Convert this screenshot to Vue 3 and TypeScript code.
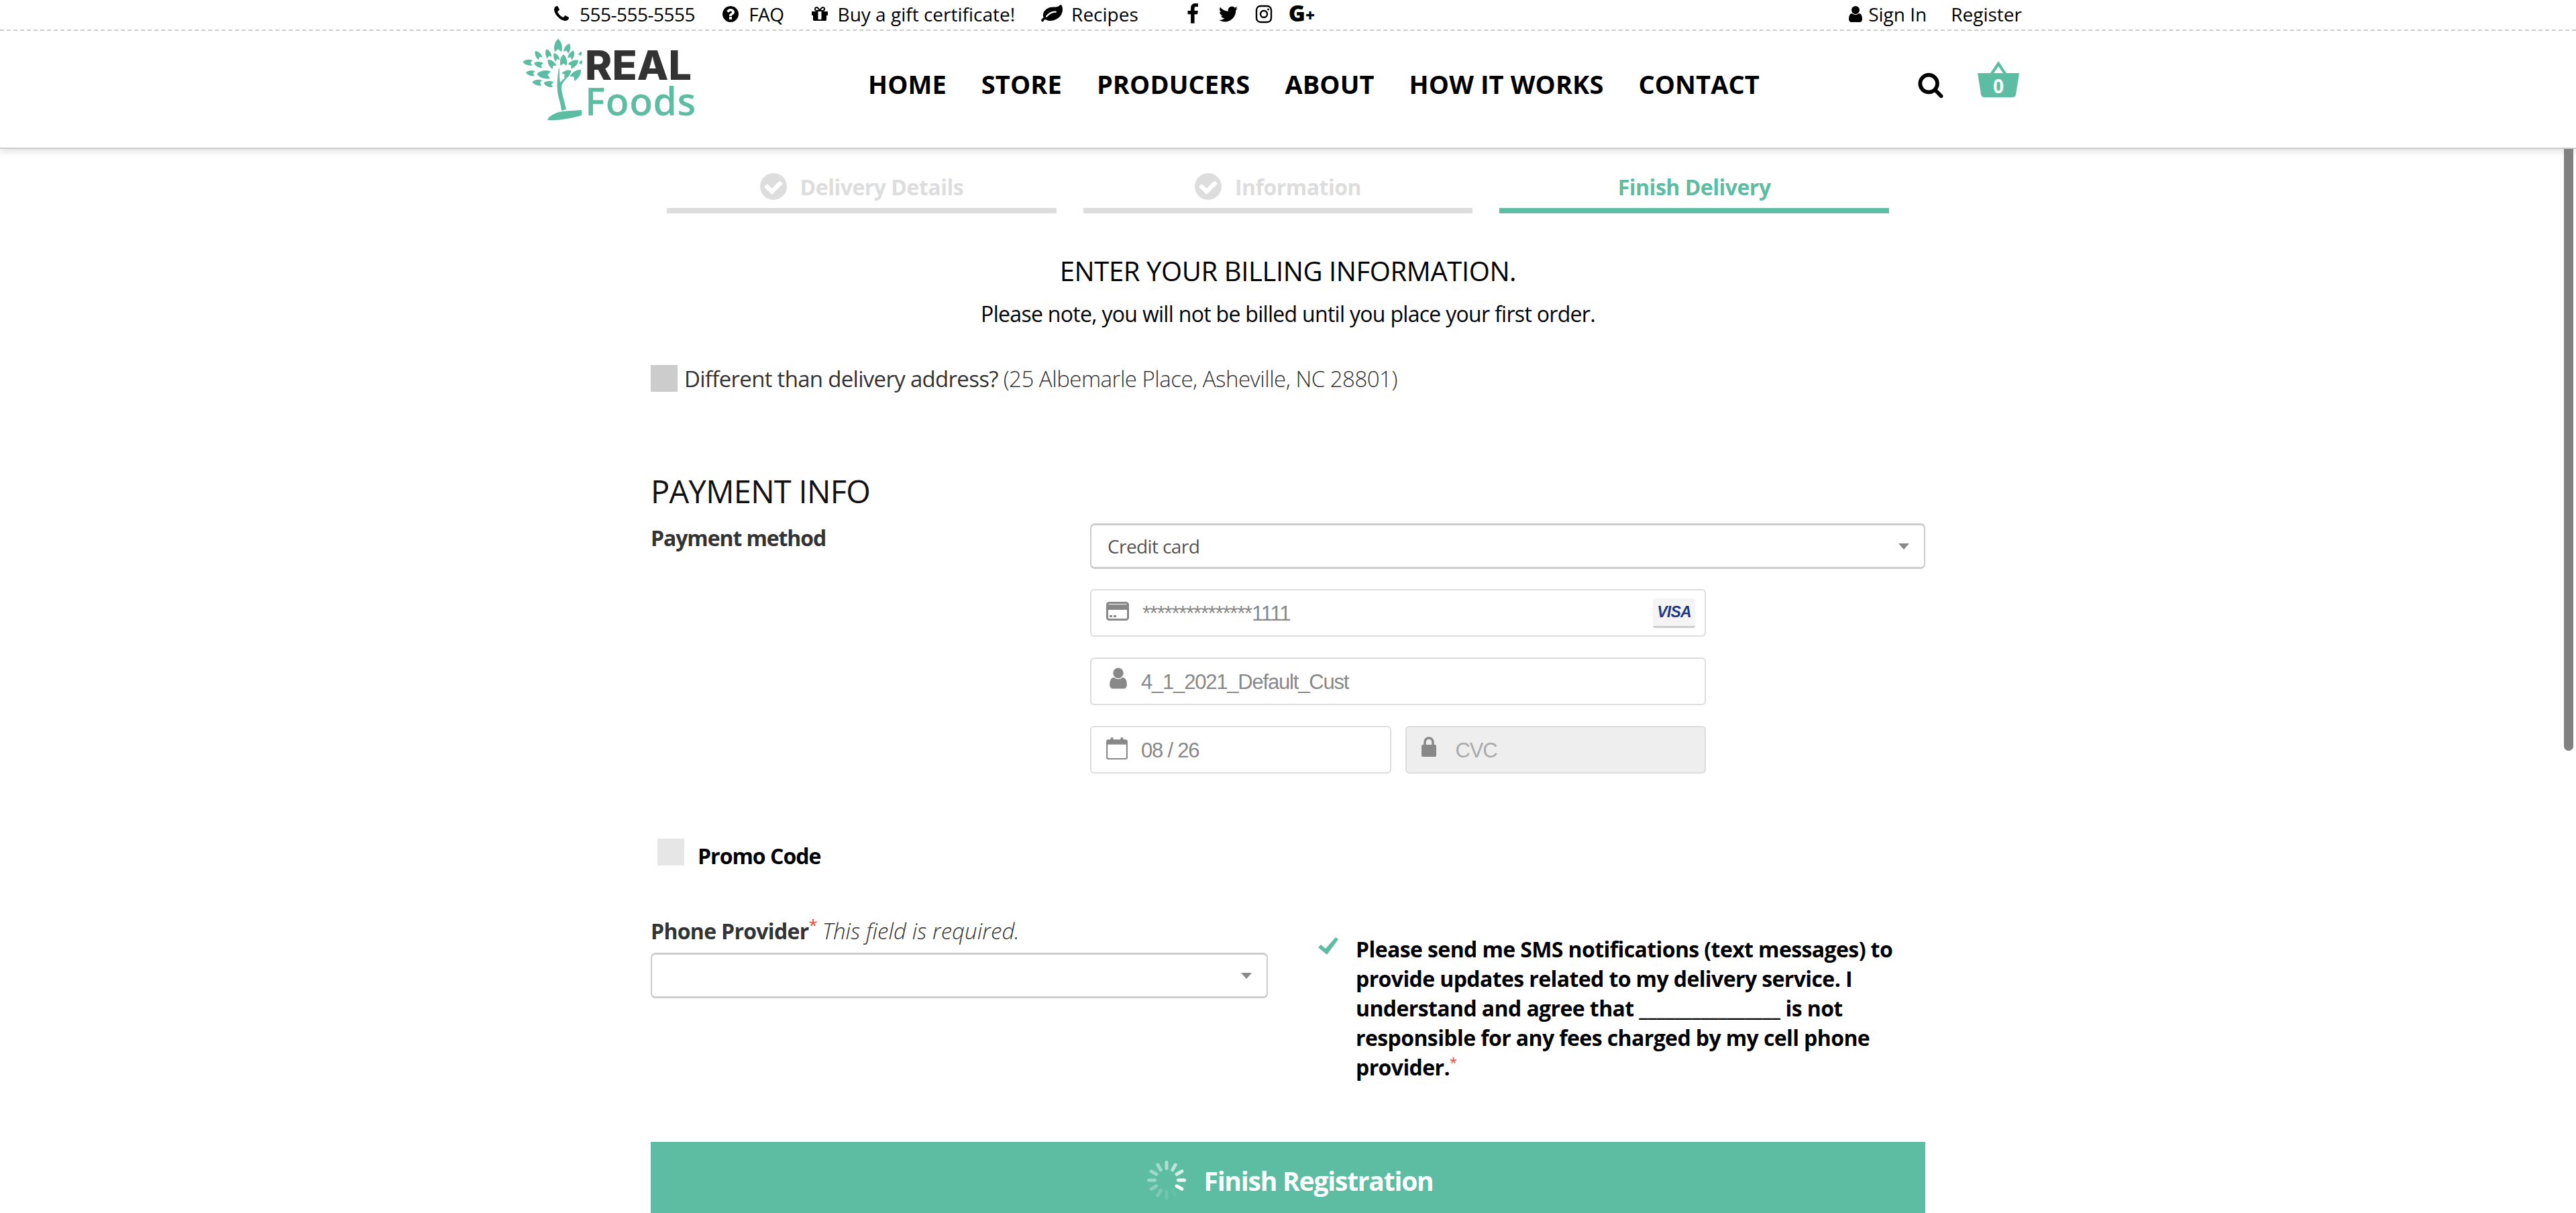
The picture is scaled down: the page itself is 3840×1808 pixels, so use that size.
<script setup lang="ts">
const topLinks = ["FAQ", "Buy a gift certificate!", "Recipes"];
const navItems = ["HOME", "STORE", "PRODUCERS", "ABOUT", "HOW IT WORKS", "CONTACT"];
const steps = [
  { label: "Delivery Details", done: true },
  { label: "Information", done: true },
  { label: "Finish Delivery", done: false },
];

const icons: Record<string, string> = {
  phone:
    "M1600 1240q0 27-10 70.5t-21 68.5q-21 50-122 106-94 51-186 51-27 0-53-3.5t-57.5-12.5-47-14.5-55.5-20.5-49-18q-98-35-175-83-127-79-264-216t-216-264q-48-77-83-175-3-9-18-49t-20.5-55.5-14.5-47-12.5-57.5-3.5-53q0-92 51-186 56-101 106-122 25-11 68.5-21t70.5-10q14 0 21 3 18 6 53 76 11 19 30 54t35 63.5 31 53.5q3 4 17.5 25t21.5 35.5 7 28.5q0 20-28.5 50t-62 55-62 53-28.5 46q0 9 5 22.5t8.5 20.5 14 24 11.5 19q76 137 174 235t235 174q2 1 19 11.5t24 14 20.5 8.5 22.5 5q18 0 46-28.5t53-62 55-62 50-28.5q14 0 28.5 7t35.5 21.5 25 17.5q25 15 53.5 31t63.5 35 54 30q70 35 76 53 3 7 3 21z",
  FAQ: "M1024 1376v-192q0-14-9-23t-23-9h-192q-14 0-23 9t-9 23v192q0 14 9 23t23 9h192q14 0 23-9t9-23zm256-672q0-88-55.5-163t-138.5-116-170-41q-243 0-371 213-15 24 8 42l132 100q7 6 19 6 16 0 25-12 53-68 86-92 34-24 86-24 48 0 85.5 26t37.5 59q0 38-20 61t-68 45q-63 28-115.5 86.5t-52.5 125.5v36q0 14 9 23t23 9h192q14 0 23-9t9-23q0-19 21.5-49.5t54.5-49.5q32-18 49-28.5t46-35 44.5-48 28-60.5 12.5-81zm384 192q0 209-103 385.5t-279.5 279.5-385.5 103-385.5-103-279.5-279.5-103-385.5 103-385.5 279.5-279.5 385.5-103 385.5 103 279.5 279.5 103 385.5z",
  "Buy a gift certificate!":
    "M1056 1356v-716h-320v716q0 25 18 38.5t46 13.5h192q28 0 46-13.5t18-38.5zm-456-844h195l-126-161q-26-31-69-31-40 0-68 28t-28 68 28 68 68 28zm688-96q0-40-28-68t-68-28q-43 0-69 31l-125 161h194q40 0 68-28t28-68zm376 256v320q0 14-9 23t-23 9h-96v416q0 40-28 68t-68 28h-1088q-40 0-68-28t-28-68v-416h-96q-14 0-23-9t-9-23v-320q0-14 9-23t23-9h440q-93 0-158.5-65.5t-65.5-158.5 65.5-158.5 158.5-65.5q107 0 168 77l128 165 128-165q61-77 168-77 93 0 158.5 65.5t65.5 158.5-65.5 158.5-158.5 65.5h440q14 0 23 9t9 23z",
  Recipes:
    "M1280 704q0-26-19-45t-45-19q-172 0-318 49.5t-259.5 134-235.5 219.5q-19 21-19 45 0 26 19 45t45 19q24 0 45-19 27-24 74-71t67-66q137-124 268.5-176t313.5-52q26 0 45-19t19-45zm512-198q0 95-20 193-46 224-184.5 383t-357.5 268q-214 108-438 108-148 0-286-47-15-5-88-42t-96-37q-16 0-39.5 32t-45 70-52.5 70-60 32q-43 0-63.5-17.5t-45.5-59.5q-2-4-6-11t-5.5-10-3-9.5-1.5-13.5q0-35 31-73.5t68-65.5 68-56 31-48q0-4-14-38t-16-44q-9-51-9-104 0-115 43.5-220t119-184.5 170.5-139 204-95.5q55-18 145-25.5t179.5-9 178.5-6 163.5-24 113.5-56.5l29.5-29.5 29.5-28 27-20 36.5-16 43.5-4.5q39 0 70.5 46t47.5 112 24 124 8 96z",
  facebook:
    "M1343 12v264h-157q-86 0-116 36t-30 108v189h293l-39 296h-254v759h-306v-759h-255v-296h255v-218q0-186 104-288.5t277-102.5q147 0 228 12z",
  twitter:
    "M1684 408q-67 98-162 167 1 14 1 42 0 130-38 259.5t-115.5 248.5-184.5 210.5-258 146-323 54.5q-271 0-496-145 35 4 78 4 225 0 401-138-105-2-188-64.5t-114-159.5q33 5 61 5 43 0 85-11-112-23-185.5-111.5t-73.5-205.5v-4q68 38 146 41-66-44-105-115t-39-154q0-88 44-163 121 149 294.5 238.5t371.5 99.5q-8-38-8-74 0-134 94.5-228.5t228.5-94.5q140 0 236 102 109-21 205-78-37 115-142 178 91-10 186-51z",
  user: "M1536 1399q0 109-62.5 187t-150.5 78h-854q-88 0-150.5-78t-62.5-187q0-85 8.5-160.5t31.5-152 58.5-131 94-89 134.5-34.5q131 128 313 128t313-128q76 0 134.5 34.5t94 89 58.5 131 31.5 152 8.5 160.5zm-256-887q0 159-112.5 271.5t-271.5 112.5-271.5-112.5-112.5-271.5 112.5-271.5 271.5-112.5 271.5 112.5 112.5 271.5z",
  search:
    "M1216 832q0-185-131.5-316.5t-316.5-131.5-316.5 131.5-131.5 316.5 131.5 316.5 316.5 131.5 316.5-131.5 131.5-316.5zm512 832q0 52-38 90t-90 38q-54 0-90-38l-343-342q-179 124-399 124-143 0-273.5-55.5t-225-150-150-225-55.5-273.5 55.5-273.5 150-225 225-150 273.5-55.5 273.5 55.5 225 150 150 225 55.5 273.5q0 220-124 399l343 343q37 37 37 90z",
  check:
    "M1412 734q0-28-18-46l-91-90q-19-19-45-19t-45 19l-408 407-226-226q-19-19-45-19t-45 19l-91 90q-18 18-18 46 0 27 18 45l362 362q19 19 45 19 27 0 46-19l543-543q18-18 18-45zm252 162q0 209-103 385.5t-279.5 279.5-385.5 103-385.5-103-279.5-279.5-103-385.5 103-385.5 279.5-279.5 385.5-103 385.5 103 279.5 279.5 103 385.5z",
};

// Leaves of the logo tree: x, y, rotation, scale
const leaves = [
  [62, 18, 0, 1.15], [76, 22, 22, 0.85], [32, 32, -35, 0.8], [47, 30, -20, 0.8],
  [59, 35, -25, 0.75], [82, 32, 25, 0.8], [70, 40, 0, 1], [52, 45, -40, 0.9],
  [85, 45, 55, 0.95], [33, 46, -75, 0.8], [17, 43, -85, 0.85], [21, 59, -85, 0.8],
  [41, 61, -85, 1.2], [75, 59, 60, 0.85], [89, 61, 45, 1.1], [31, 73, -85, 0.85],
  [48, 75, -80, 0.85], [95, 30, 30, 0.4], [96, 43, 30, 0.4],
];
// Spinner spokes, clockwise from 12 o'clock
const spokeOpacity = [0.5, 0.6, 0.75, 0.9, 1, 0.05, 0.12, 0.2, 0.28, 0.38, 0.42, 0.45];
</script>

<template>
  <div class="page">
    <header class="site-head">
      <div class="topbar">
        <div class="topbar-inner">
          <span class="top-link tight">
            <svg class="ico" viewBox="0 0 1792 1792"><path :d="icons.phone" /></svg>555-555-5555
          </span>
          <span v-for="l in topLinks" :key="l" class="top-link" :class="{ tight: l === 'FAQ', leafy: l === 'Recipes' }">
            <svg class="ico" viewBox="0 0 1792 1792"><path :d="icons[l]" /></svg>{{ l }}
          </span>
          <span class="socials">
            <svg class="ico" viewBox="0 0 1792 1792"><path :d="icons.facebook" /></svg>
            <svg class="ico" viewBox="0 0 1792 1792"><path :d="icons.twitter" /></svg>
            <svg class="ico" viewBox="0 0 32 32">
              <rect x="5" y="4" width="22" height="24" rx="6" fill="none" stroke="#000" stroke-width="2.4" />
              <circle cx="16" cy="16" r="5" fill="none" stroke="#000" stroke-width="2.4" />
              <circle cx="22.5" cy="9" r="1.5" />
            </svg>
            <span class="gplus">G<small>+</small></span>
          </span>
          <span class="account">
            <span class="top-link sign">
              <svg class="ico" viewBox="0 0 1792 1792"><path :d="icons.user" /></svg>Sign In
            </span>
            <span class="top-link">Register</span>
          </span>
        </div>
      </div>
      <div class="masthead">
        <div class="logo">
          <svg class="tree" viewBox="0 0 100 130">
            <path
              d="M67 115c-1-12-5-19-6-30-1-10 0-20 2-33l1 0c0 8 0 15 1 21 4-5 9-9 14-13l1 1c-5 5-11 11-13 17 0 12 4 20 7 35z"
              fill="#5cbda2"
            />
            <path d="M46 129c2-5 7-8 14-11 8-3 24-3 37-4l0 8c-10 3-30 8-51 7z" fill="#5cbda2" />
            <path
              v-for="(leaf, i) in leaves"
              :key="i"
              :transform="`translate(${leaf[0]} ${leaf[1]}) rotate(${leaf[2]}) scale(${leaf[3]})`"
              d="M0-9C5-5 6 2 4.500 8L0 4.500-4.500 8C-6 2-5-5 0-9Z"
              fill="#5cbda2"
            />
          </svg>
          <div class="wordmark">
            <span class="real">REAL</span>
            <span class="foods">Foods</span>
          </div>
        </div>
        <nav class="nav">
          <a v-for="n in navItems" :key="n">{{ n }}</a>
        </nav>
        <div class="tools">
          <svg class="search" viewBox="0 0 1792 1792"><path :d="icons.search" /></svg>
          <span class="basket">
            <svg viewBox="0 0 62 58">
              <path d="M31 3 17 24h5L31 11l9 13h5Z" fill="#5cbda2" />
              <path d="M0 21h62l-5 32q-1 4-5 4H10q-4 0-5-4Z" fill="#5cbda2" />
            </svg>
            <b>0</b>
          </span>
        </div>
      </div>
    </header>

    <main class="content">
      <div class="steps">
        <div v-for="s in steps" :key="s.label" class="step" :class="{ active: !s.done }">
          <svg v-if="s.done" viewBox="128 128 1536 1536"><path :d="icons.check" /></svg>
          <span>{{ s.label }}</span>
        </div>
      </div>

      <h1 class="title">ENTER YOUR BILLING INFORMATION.</h1>
      <p class="subtitle">Please note, you will not be billed until you place your first order.</p>

      <div class="diff-row">
        <span class="box"></span>
        <span class="diff-text">Different than delivery address? <em>(25 Albemarle Place, Asheville, NC 28801)</em></span>
      </div>

      <h2 class="section">PAYMENT INFO</h2>
      <div class="pay-row">
        <label class="field-label">Payment method</label>
        <div class="pay-col">
          <div class="select"><span>Credit card</span><i class="caret"></i></div>
          <div class="card-box">
            <div class="input">
              <svg class="field-ico" viewBox="0 0 34 28">
                <rect x="1.500" y="1.500" width="31" height="25" rx="3" fill="#fff" stroke="#888" stroke-width="3" />
                <rect x="1" y="4" width="32" height="8" fill="#888" />
                <rect x="5" y="20" width="4" height="3" fill="#888" /><rect x="11" y="20" width="4" height="3" fill="#888" />
              </svg>
              <span class="value">***************1111</span>
              <span class="visa"><b>VISA</b></span>
            </div>
            <div class="input">
              <svg class="field-ico user-ico" viewBox="0 0 1792 1792"><path :d="icons.user" fill="#888" /></svg>
              <span class="value">4_1_2021_Default_Cust</span>
            </div>
            <div class="input-pair">
              <div class="input">
                <svg class="field-ico" viewBox="0 0 30 32">
                  <rect x="1" y="5" width="28" height="26" rx="2" fill="#fff" stroke="#888" stroke-width="2" />
                  <rect x="1" y="5" width="28" height="6" fill="#888" />
                  <rect x="6" y="1" width="4" height="8" rx="2" fill="#888" /><rect x="20" y="1" width="4" height="8" rx="2" fill="#888" />
                </svg>
                <span class="value">08 / 26</span>
              </div>
              <div class="input disabled">
                <svg class="field-ico lock" viewBox="0 0 22 30">
                  <rect x="0" y="12" width="22" height="18" rx="2" fill="#888" />
                  <path d="M5 13V8a6 6 0 0 1 12 0v5" fill="none" stroke="#888" stroke-width="3.500" />
                </svg>
                <span class="value">CVC</span>
              </div>
            </div>
          </div>
        </div>
      </div>

      <div class="promo">
        <span class="box light"></span>
        <b>Promo Code</b>
      </div>

      <div class="sms-row">
        <div class="provider">
          <div class="provider-label">
            <b>Phone Provider</b><sup>*</sup> <em>This field is required.</em>
          </div>
          <div class="select"><i class="caret"></i></div>
        </div>
        <div class="consent">
          <svg viewBox="0 0 30 26"><path d="M0 15l4-4 7 6L26 0l4 3-17 23Z" fill="#5cbda2" /></svg>
          <p>
            Please send me SMS notifications (text messages) to provide updates related to my delivery service. I
            understand and agree that <u>________________</u> is not responsible for any fees charged by my cell phone
            provider.<sup>*</sup>
          </p>
        </div>
      </div>

      <button class="finish" type="button">
        <svg class="spinner" viewBox="-30 -30 60 60">
          <rect
            v-for="(o, i) in spokeOpacity"
            :key="i"
            x="-2.500"
            y="-29"
            width="5"
            height="14"
            rx="2.500"
            fill="#fff"
            :opacity="o"
            :transform="`rotate(${i * 30})`"
          />
        </svg>
        Finish Registration
      </button>
    </main>

    <div class="scroll-thumb"></div>
  </div>
</template>

<style>
html,
body {
  margin: 0;
  background: #fff;
  overflow: hidden;
}
</style>

<style scoped>
.page {
  position: relative;
  width: 3840px;
  height: 1808px;
  overflow: hidden;
  font-family: "Open Sans", "Noto Sans", sans-serif;
  color: #000;
  background: #fff;
}
.site-head {
  position: relative;
  height: 222px;
  box-sizing: border-box;
  border-bottom: 2px solid #ccc;
  box-shadow: 0 4px 10px rgba(0, 0, 0, 0.12);
}
.topbar {
  height: 46px;
  box-sizing: border-box;
  border-bottom: 2px dashed #ccc;
}
.topbar-inner {
  width: 2191px;
  height: 42px;
  margin-left: 823px;
  display: flex;
  align-items: center;
  font-size: 28px;
}
.top-link {
  display: inline-flex;
  align-items: center;
  margin-right: 39px;
  white-space: nowrap;
}
.tight {
  letter-spacing: -0.5px;
}
.ico {
  width: 28px;
  height: 28px;
  margin-right: 13px;
  flex: none;
}
.leafy .ico {
  width: 32px;
  height: 32px;
}
.socials {
  display: flex;
  align-items: center;
  margin-left: 26px;
}
.socials .ico {
  width: 32px;
  height: 32px;
  margin-right: 21px;
}
.gplus {
  font-weight: 800;
  font-size: 34px;
  line-height: 42px;
}
.gplus small {
  font-size: 24px;
}
.account {
  margin-left: auto;
  display: flex;
}
.account .top-link {
  margin-right: 36px;
}
.account .top-link:last-child {
  margin-right: 0;
}
.sign .ico {
  margin-right: 5px;
}
.masthead {
  height: 174px;
  display: flex;
  padding: 0 830px 0 770px;
}
.logo {
  display: flex;
  width: 524px;
  flex: none;
  padding-top: 4px;
  box-sizing: border-box;
}
.tree {
  width: 100px;
  height: 130px;
  flex: none;
}
.wordmark {
  display: flex;
  flex-direction: column;
  margin-left: 2px;
  padding-top: 17px;
}
.real {
  font-family: Inter, sans-serif;
  font-weight: 800;
  font-size: 61px;
  line-height: 60px;
  color: #333;
  letter-spacing: 0;
}
.foods {
  font-size: 57px;
  line-height: 50px;
  margin-top: -2px;
  color: #5cbda2;
  font-weight: 600;
  letter-spacing: 0.5px;
}
.nav {
  display: flex;
  gap: 52px;
  padding-top: 53px;
  font-weight: 700;
  font-size: 38px;
  line-height: 52px;
  letter-spacing: 0.1px;
}
.nav a {
  white-space: nowrap;
}
.tools {
  margin-left: auto;
  display: flex;
  padding-top: 60px;
}
.search {
  width: 40px;
  height: 40px;
  margin-right: 50px;
}
.basket {
  position: relative;
  width: 62px;
  height: 58px;
  margin-top: -18px;
}
.basket svg {
  width: 62px;
  height: 58px;
  display: block;
}
.basket b {
  position: absolute;
  left: 0;
  right: 0;
  top: 24px;
  text-align: center;
  color: #fff;
  font-size: 28px;
  line-height: 32px;
}
.content {
  width: 1900px;
  margin: 0 auto;
}
.steps {
  width: 1822px;
  margin-left: 24px;
  display: flex;
  gap: 40px;
}
.step {
  flex: 1;
  height: 96px;
  box-sizing: border-box;
  border-bottom: 8px solid #ddd;
  display: flex;
  align-items: center;
  justify-content: center;
  gap: 20px;
  font-weight: 700;
  font-size: 32px;
  letter-spacing: -0.5px;
  color: #ddd;
  padding-top: 24px;
}
.step svg {
  width: 40px;
  height: 40px;
  fill: #ddd;
}
.step.active {
  color: #5cbda2;
  border-bottom-color: #5cbda2;
}
.title {
  margin: 56px 0 0;
  text-align: center;
  font-weight: 400;
  font-size: 40px;
  line-height: 60px;
  letter-spacing: -0.4px;
}
.subtitle {
  margin: 4px 0 0;
  text-align: center;
  font-size: 32px;
  line-height: 60px;
  letter-spacing: -0.7px;
}
.diff-row {
  display: flex;
  align-items: center;
  margin-top: 46px;
  height: 40px;
  font-size: 33px;
  color: #333;
  letter-spacing: -0.7px;
}
.box {
  width: 40px;
  height: 40px;
  background: #ccc;
  flex: none;
}
.box.light {
  background: #e6e6e6;
}
.diff-text {
  margin-left: 10px;
}
.diff-text em {
  font-style: normal;
  font-weight: 300;
  letter-spacing: -0.5px;
}
.section {
  margin: 118px 0 0;
  font-weight: 400;
  font-size: 47px;
  line-height: 60px;
  color: #111;
  letter-spacing: -0.7px;
}
.pay-row {
  display: flex;
  margin-top: 18px;
}
.field-label {
  width: 655px;
  flex: none;
  font-weight: 700;
  font-size: 32px;
  line-height: 44px;
  color: #333;
  letter-spacing: -1.1px;
}
.pay-col {
  flex: 1;
}
.select {
  height: 68px;
  box-sizing: border-box;
  border: 2px solid #ccc;
  border-top-width: 3px;
  border-bottom-width: 3px;
  border-radius: 7px;
  display: flex;
  align-items: center;
  padding: 0 24px;
  font-size: 28px;
  color: #555;
  letter-spacing: -0.6px;
}
.caret {
  margin-left: auto;
  margin-right: -2px;
  border-left: 8px solid transparent;
  border-right: 8px solid transparent;
  border-top: 9px solid #888;
}
.card-box {
  width: 918px;
  margin-top: 30px;
  display: flex;
  flex-direction: column;
  gap: 31px;
}
.input {
  height: 71px;
  box-sizing: border-box;
  border: 2px solid #ddd;
  border-radius: 6px;
  display: flex;
  align-items: center;
  padding: 0 14px 0 22px;
  font-family: "Liberation Sans", sans-serif;
  font-size: 31px;
  color: #888;
  letter-spacing: -1.2px;
}
.field-ico {
  width: 34px;
  height: 28px;
  margin-top: -6px;
  flex: none;
}
.user-ico {
  width: 36px;
  height: 36px;
  margin-top: -10px;
}
.value {
  margin-left: 20px;
  padding-top: 3px;
}
.user-ico + .value {
  margin-left: 16px;
}
.visa {
  position: relative;
  margin-left: auto;
  width: 63px;
  height: 44px;
  box-sizing: border-box;
  background: #f4f4f4;
  border-bottom: 3px solid #ccc;
  border-radius: 3px;
  display: flex;
  align-items: center;
  justify-content: center;
}
.visa b {
  font-style: italic;
  font-size: 23px;
  letter-spacing: -0.8px;
  color: #22387f;
}
.input-pair {
  display: flex;
  gap: 21px;
}
.input-pair .input {
  flex: 1;
}
.input-pair .field-ico {
  width: 32px;
  height: 34px;
}
.input.disabled {
  background: #eee;
  color: #aaa;
}
.input-pair .lock {
  width: 22px;
  height: 30px;
  margin-top: -10px;
}
.disabled .value {
  margin-left: 29px;
}
.promo {
  display: flex;
  align-items: center;
  gap: 20px;
  margin: 97px 0 0 10px;
  height: 40px;
  font-size: 32px;
  letter-spacing: -1px;
}
.promo b {
  padding-top: 10px;
}
.sms-row {
  display: flex;
  margin-top: 76px;
}
.provider {
  width: 920px;
  flex: none;
}
.provider-label {
  font-size: 32px;
  line-height: 44px;
  color: #333;
  letter-spacing: -0.7px;
  margin-bottom: 10px;
  white-space: nowrap;
}
.provider-label em {
  font-size: 33px;
  font-weight: 300;
  letter-spacing: 0.1px;
}
sup {
  color: #e8452c;
  font-size: 24px;
  line-height: 0;
}
.consent {
  display: flex;
  margin-left: 75px;
  padding-top: 27px;
}
.consent svg {
  width: 30px;
  height: 26px;
  flex: none;
  margin: 4px 26px 0 0;
}
.consent p {
  margin: 0;
  width: 810px;
  font-weight: 700;
  font-size: 32px;
  line-height: 44px;
  letter-spacing: -0.6px;
}
.consent sup {
  font-weight: 400;
  font-size: 20px;
}
.consent u {
  text-decoration: none;
  letter-spacing: 0;
}
.finish {
  display: flex;
  align-items: center;
  justify-content: center;
  gap: 25px;
  width: 100%;
  height: 130px;
  margin-top: 89px;
  border: 0;
  background: #5cbda2;
  color: #fff;
  font-family: inherit;
  font-weight: 700;
  font-size: 39px;
  letter-spacing: -1.2px;
  padding: 0 0 16px 6px;
}
.spinner {
  width: 60px;
  height: 60px;
}
.scroll-thumb {
  position: absolute;
  left: 3822px;
  top: 222px;
  width: 14px;
  height: 897px;
  background: #808080;
  border-radius: 0 0 7px 7px;
}
</style>
